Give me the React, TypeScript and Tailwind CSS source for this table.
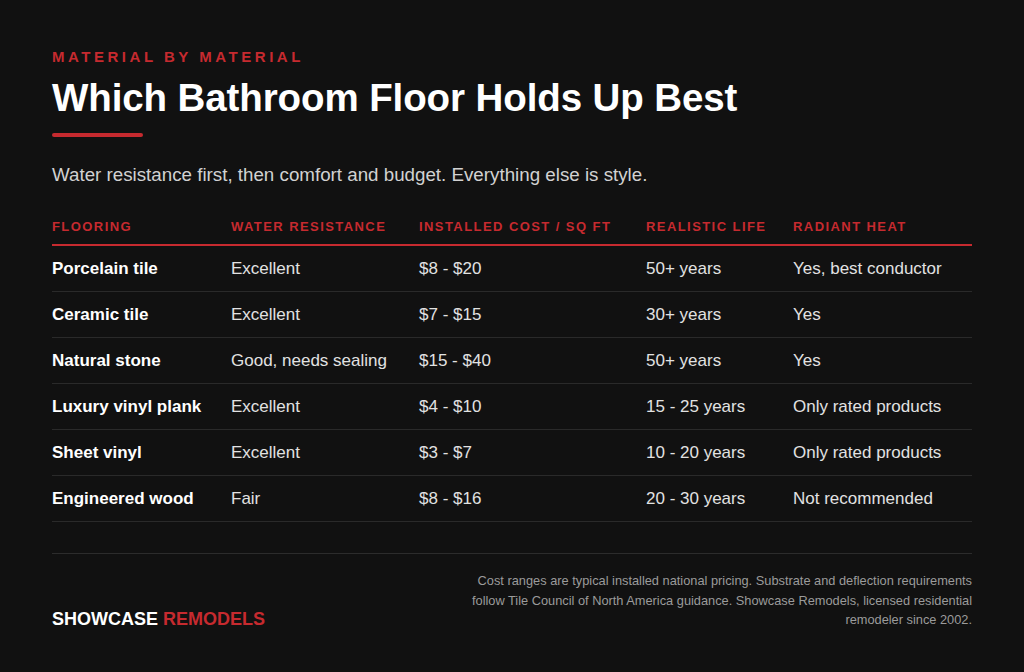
import React from "react";

const rows = [
  ["Porcelain tile", "Excellent", "$8 - $20", "50+ years", "Yes, best conductor"],
  ["Ceramic tile", "Excellent", "$7 - $15", "30+ years", "Yes"],
  ["Natural stone", "Good, needs sealing", "$15 - $40", "50+ years", "Yes"],
  ["Luxury vinyl plank", "Excellent", "$4 - $10", "15 - 25 years", "Only rated products"],
  ["Sheet vinyl", "Excellent", "$3 - $7", "10 - 20 years", "Only rated products"],
  ["Engineered wood", "Fair", "$8 - $16", "20 - 30 years", "Not recommended"],
];

const headers = ["Flooring", "Water resistance", "Installed cost / sq ft", "Realistic life", "Radiant heat"];

export default function App() {
  return (
    <div
      className="w-[1024px] h-[672px] bg-[#111111] overflow-hidden px-[52px] pt-[48px]"
      style={{ fontFamily: '"Liberation Sans", Arial, Helvetica, sans-serif' }}
    >
      <div className="text-[15px] leading-[18px] font-bold uppercase tracking-[0.235em] text-[#c62a2f]">
        Material by Material
      </div>
      <h1 className="mt-[10px] text-[38.5px] leading-[44px] font-bold tracking-[-0.1px] text-white">
        Which Bathroom Floor Holds Up Best
      </h1>
      <div className="mt-[13px] w-[91px] h-[4px] rounded-full bg-[#c62a2f]" />
      <p className="mt-[25px] text-[18.75px] leading-[26px] text-[#d2d2d2]">
        Water resistance first, then comfort and budget. Everything else is style.
      </p>

      <div className="mt-[31px]">
        <div className="grid grid-cols-[179px_188px_227px_147px_179px] border-b-2 border-[#c62a2f] pb-[9px]">
          {headers.map((h) => (
            <div
              key={h}
              className="text-[13px] leading-[16px] font-bold uppercase tracking-[0.11em] text-[#c62a2f] whitespace-nowrap"
            >
              {h}
            </div>
          ))}
        </div>
        {rows.map((r) => (
          <div
            key={r[0]}
            className="grid grid-cols-[179px_188px_227px_147px_179px] border-b border-[#2a2a2a] pt-[11px] pb-[10px] text-[17px] leading-[24px]"
          >
            <div className="font-bold text-white whitespace-nowrap">{r[0]}</div>
            {r.slice(1).map((c, i) => (
              <div key={i} className="text-[#e2e2e2] whitespace-nowrap">
                {c}
              </div>
            ))}
          </div>
        ))}
      </div>

      <div className="mt-[31px] h-px bg-[#2c2c2c]" />

      <div className="pt-[17px] flex items-end justify-between">
        <div className="text-[18px] leading-[22px] font-bold text-white whitespace-nowrap">
          SHOWCASE <span className="text-[#c62a2f]">REMODELS</span>
        </div>
        <p className="text-right text-[12.8px] leading-[19.5px] text-[#9b9b9b]">
          Cost ranges are typical installed national pricing. Substrate and deflection requirements
          <br />
          follow Tile Council of North America guidance. Showcase Remodels, licensed residential
          <br />
          remodeler since 2002.
        </p>
      </div>
    </div>
  );
}
